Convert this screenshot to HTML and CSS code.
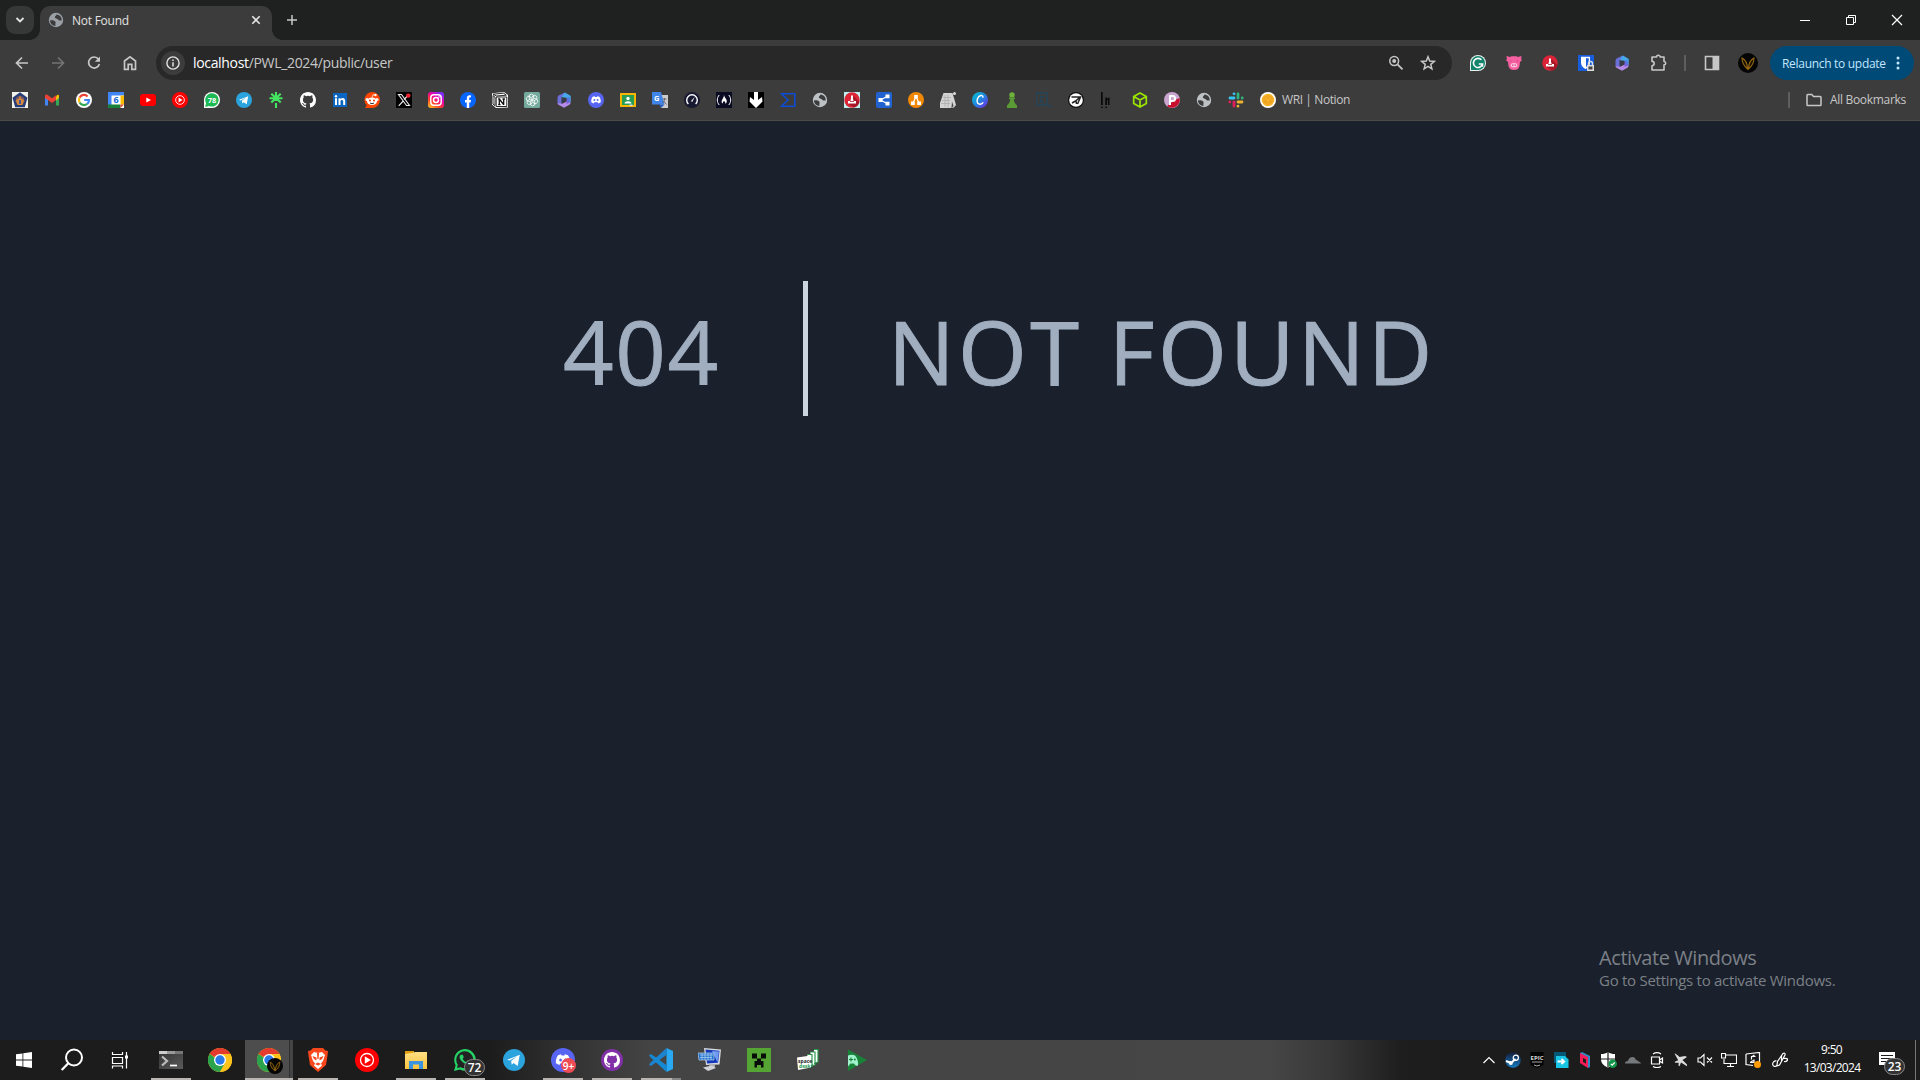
FILE: index.html
```html
<!DOCTYPE html>
<html lang="en">
<head>
<meta charset="utf-8">
<title>Not Found</title>
<link rel="stylesheet" href="styles.css">
</head>
<body>
<svg class="sprite" width="0" height="0" aria-hidden="true">
  <defs>
    <linearGradient id="m365" x1="0" y1="1" x2="1" y2="0"><stop offset="0" stop-color="#8a55dd"/><stop offset=".5" stop-color="#5a6edc"/><stop offset="1" stop-color="#35b5f0"/></linearGradient>
    <linearGradient id="insta" x1="0" y1="1" x2=".7" y2="0"><stop offset="0" stop-color="#ffd522"/><stop offset=".4" stop-color="#ff3b2f"/><stop offset=".7" stop-color="#f000b0"/><stop offset="1" stop-color="#7b30ff"/></linearGradient>
    <linearGradient id="canva" x1="0" y1="0" x2="1" y2="1"><stop offset="0" stop-color="#00c4cc"/><stop offset=".5" stop-color="#2087e0"/><stop offset="1" stop-color="#7a20e8"/></linearGradient>
    <linearGradient id="steam" x1="0" y1="0" x2="0" y2="1"><stop offset="0" stop-color="#121c3a"/><stop offset="1" stop-color="#187ac0"/></linearGradient>
    <linearGradient id="term" x1="0" y1="0" x2="1" y2="1"><stop offset="0" stop-color="#333"/><stop offset="1" stop-color="#5a5a5a"/></linearGradient>
    <linearGradient id="folder" x1="0" y1="0" x2="0" y2="1"><stop offset="0" stop-color="#ffe083"/><stop offset="1" stop-color="#f9c33c"/></linearGradient>
  </defs>
  <symbol id="globe" viewBox="0 0 16 16"><circle cx="8" cy="8" r="7.200" fill="currentColor"/><path d="M2 8.500c2.500-.5 5 .2 5.500 1.600.4 1.300-.5 1.700 0 3.900-3-.1-5.400-2.300-5.500-5.500zM8.500 2.400C8 4 6.800 3.800 6.900 5.200 7 6.800 9 6 9.800 7.300c.7 1.300 2 1.500 3.900 1.200.4-3-1.700-5.700-5.200-6.100z" fill="#3c3c3c"/></symbol>
  <symbol id="ytm" viewBox="0 0 24 24"><circle cx="12" cy="12" r="12" fill="#f00"/><circle cx="12" cy="12" r="6.500" fill="none" stroke="#fff" stroke-width="1.300"/><path d="M9.800 8.300l6 3.700-6 3.700z" fill="#fff"/></symbol>
  <symbol id="telegram" viewBox="0 0 24 24"><circle cx="12" cy="12" r="12" fill="#2ba3dd"/><path d="M4.500 11.800l13.800-5.500-2.300 12.200-4.500-3.300-2 2-.6-4.200 6.500-5-8.200 4.600z" fill="#fff"/></symbol>
  <symbol id="github" viewBox="0 0 16 16"><path d="M8 0C3.580 0 0 3.580 0 8c0 3.540 2.290 6.530 5.470 7.590.4.070.55-.17.55-.38 0-.19-.01-.82-.01-1.490-2.010.37-2.530-.49-2.690-.94-.09-.23-.48-.94-.82-1.130-.28-.15-.68-.52-.01-.53.63-.01 1.080.58 1.230.82.72 1.210 1.870.87 2.330.66.070-.52.28-.87.51-1.070-1.780-.2-3.640-.89-3.640-3.950 0-.87.31-1.590.82-2.150-.08-.2-.36-1.020.08-2.120 0 0 .67-.21 2.200.82a7.600 7.600 0 0 1 4 0c1.530-1.040 2.200-.82 2.200-.82.44 1.100.16 1.920.08 2.120.51.56.82 1.270.82 2.150 0 3.070-1.870 3.750-3.650 3.950.29.25.54.73.54 1.480 0 1.070-.01 1.930-.01 2.200 0 .21.15.46.55.38A8 8 0 0 0 16 8c0-4.420-3.580-8-8-8z" fill="currentColor"/></symbol>
  <symbol id="m365i" viewBox="0 0 16 16"><path d="M9 .5l5.500 3.300v4.700l-4.200-2.800L6 5.200V2.200z" fill="#45a8ea"/><path d="M9 .5L3 3.200Q1.500 4 1.500 5.800V11l4 1.800V5.300z" fill="#6a6fd8"/><path d="M1.500 11l4.500.8 8.500-4v2.900q0 1.300-1.200 2L8 15.700l-5-2.600q-1.500-.8-1.500-2.100z" fill="#b58bea"/><path d="M14.500 4v6l-4 2V6z" fill="url(#m365)"/><path d="M6 5.800l4 2.200-4 3.500z" fill="#37394e"/></symbol>
  <symbol id="discord" viewBox="0 0 24 24"><circle cx="12" cy="12" r="12" fill="#5865f2"/><path d="M7 7.200l3-.9.600 1.100h2.800l.6-1.100 3 .9c1.800 2.700 2.400 5.400 2.100 8.100l-3.400 1.800-1-1.700H9.300l-1 1.700-3.400-1.800C4.600 12.600 5.200 9.900 7 7.200z" fill="#fff"/><ellipse cx="9.600" cy="12" rx="1.400" ry="1.600" fill="#5865f2"/><ellipse cx="14.400" cy="12" rx="1.400" ry="1.600" fill="#5865f2"/></symbol>
  <symbol id="stamp" viewBox="0 0 16 16"><circle cx="8" cy="8" r="7.700" fill="#dc2438"/><path d="M9.500 4l6 6c-1 3.500-3.500 5-5.500 5.500L4.500 12z" fill="#a81627"/><path d="M7 3.600h2v2.800L9.600 9H12v2.600H4V9h2.400L7 6.400zM6 9.300h4v.8H6z" fill="#fff" fill-rule="evenodd"/></symbol>
  <symbol id="chrome" viewBox="0 0 24 24"><circle cx="12" cy="12" r="12" fill="#fbc117"/><path d="M12 12L1.600 6A12 12 0 0 1 22.400 6z" fill="#e33b2e"/><path d="M12 12l-6-3L1.600 6A12 12 0 0 0 12 24l5.200-9z" fill="#2ba24c"/><path d="M12 6h10.400A12 12 0 0 1 12 24l5.200-9z" fill="#fcc31b"/><circle cx="12" cy="12" r="6" fill="#fff"/><circle cx="12" cy="12" r="4.700" fill="#2a7bea"/></symbol>
  <symbol id="avatar" viewBox="0 0 20 20"><circle cx="10" cy="10" r="10" fill="#050505"/><path d="M4 5c0 5 2 8 5.500 11C9.500 11 8 7 4 5zM16 5c0 5-2 8-5.500 11 0-5 1.500-9 5.500-11z" fill="#1c1303" stroke="#94680f" stroke-width="1.100"/></symbol>
  <symbol id="wa" viewBox="0 0 24 24"><path d="M1 23l1.600-5.800A10.800 10.800 0 1 1 6.900 21.400z" fill="currentColor"/></symbol>
</svg>

<header class="browser">
  <div class="tabstrip">
    <button class="tab-search" aria-label="Search tabs"><svg width="10" height="10" viewBox="0 0 10 10"><path d="M1.500 3l3.500 3.500L8.500 3" fill="none" stroke="#e3e3e3" stroke-width="1.800"/></svg></button>
    <div class="tab">
      <svg class="tab-icon" width="16" height="16"><use href="#globe"/></svg>
      <span class="tab-title">Not Found</span>
      <svg width="10" height="10" viewBox="0 0 10 10"><path d="M1.300 1.300l7.400 7.400M8.700 1.300L1.300 8.700" stroke="#e3e3e3" stroke-width="1.600"/></svg>
    </div>
    <svg class="new-tab" width="12" height="12" viewBox="0 0 12 12"><path d="M6 1v10M1 6h10" stroke="#c7c7c7" stroke-width="1.500"/></svg>
    <div class="window-controls">
      <svg width="46" height="40" viewBox="0 0 46 40"><path d="M18 20.500h10" stroke="#fff"/></svg>
      <svg width="46" height="40" viewBox="0 0 46 40"><path d="M18.500 17.500h7v7h-7zM20.500 17.500v-2h7v7h-2" fill="none" stroke="#fff"/></svg>
      <svg width="46" height="40" viewBox="0 0 46 40"><path d="M18 15l10 10M28 15L18 25" stroke="#fff" stroke-width="1.200"/></svg>
    </div>
  </div>

  <div class="toolbar">
    <nav class="nav-buttons">
      <svg width="16" height="16" viewBox="0 0 16 16"><path d="M14 8H3M8 2.500L2.500 8 8 13.500" fill="none" stroke="#c7c7c7" stroke-width="1.700"/></svg>
      <svg width="16" height="16" viewBox="0 0 16 16"><path d="M2 8h11M8 2.500L13.500 8 8 13.500" fill="none" stroke="#737373" stroke-width="1.700"/></svg>
      <svg width="16" height="16" viewBox="0 0 16 16"><path d="M12.500 4.200A5.500 5.500 0 1 0 13.400 9" fill="none" stroke="#c7c7c7" stroke-width="1.700"/><path d="M14 1.500v5.200H8.800z" fill="#c7c7c7"/></svg>
      <svg width="16" height="16" viewBox="0 0 16 16"><path d="M2.500 6L8 1.800 13.500 6v8.300H9.800v-5H6.200v5H2.500z" fill="none" stroke="#c7c7c7" stroke-width="1.700"/></svg>
    </nav>
    <div class="omnibox">
      <span class="site-info"><svg width="14" height="14" viewBox="0 0 14 14"><circle cx="7" cy="7" r="6.100" fill="none" stroke="#e3e3e3" stroke-width="1.400"/><path d="M7 6.200v4.200M7 3.500V5" stroke="#e3e3e3" stroke-width="1.500"/></svg></span>
      <span class="url"><b>localhost</b>/PWL_2024/public/user</span>
      <svg width="16" height="16" viewBox="0 0 16 16"><circle cx="6.200" cy="6" r="4.400" fill="none" stroke="#c7c7c7" stroke-width="1.500"/><circle cx="6.200" cy="6" r="2" fill="#c7c7c7"/><path d="M9.500 9.300l5 5" stroke="#c7c7c7" stroke-width="1.800"/></svg>
      <svg width="16" height="16" viewBox="0 0 16 16"><path d="M8 1.800l1.700 4.300 4.700.3-3.600 3 1.100 4.500L8 11.400l-3.900 2.500 1.100-4.500-3.600-3 4.700-.3z" fill="none" stroke="#c7c7c7" stroke-width="1.500"/></svg>
    </div>
    <div class="extensions">
      <svg width="16" height="16" viewBox="0 0 16 16"><path d="M8 0a8 8 0 1 1 0 16H0V8a8 8 0 0 1 8-8z" fill="#e8f3ef"/><path d="M8 1a7 7 0 1 1 0 14H1V8a7 7 0 0 1 7-7z" fill="#13836c"/><path d="M11.400 4.800A4.600 4.600 0 1 0 12.500 9H8.800M12.500 8.300v3.400" fill="none" stroke="#fff" stroke-width="1.600"/></svg>
      <svg width="16" height="16" viewBox="0 0 16 16"><path d="M.5 1l3.500 1 1.500-.7h5L12 2l3.500-1-.3 3.500.8 1-2 1.300-.5 4.500L12 14q-4 2-8 0l-1.500-2.700L2 6.800 0 5.500l.8-1z" fill="#f65fa0"/><ellipse cx="8" cy="10.300" rx="3.300" ry="2.200" fill="#ffc4dc"/><path d="M6.800 9.300v1.800M9.200 9.300v1.800M4.700 5.500v1.200M11.300 5.500v1.200" stroke="#c0387c"/></svg>
      <svg width="16" height="16"><use href="#stamp"/></svg>
      <svg width="16" height="16" viewBox="0 0 16 16"><path d="M0 0h16v16H0z" fill="#175ddc"/><path d="M3 1.700h9v6c0 3-2 5-4.500 6.300C5 12.700 3 10.700 3 7.700z" fill="#fff"/><path d="M8 3.300h2.700v5C10.500 10 9.500 11 8 12z" fill="#175ddc"/><path d="M9 10h7v6H9z" fill="#ddd"/><path d="M10.500 10V8.500a2 2 0 0 1 4 0V10" fill="none" stroke="#ddd" stroke-width="1.400"/><path d="M10.500 11.500h4v3h-4z" fill="#444"/></svg>
      <svg width="16" height="16"><use href="#m365i"/></svg>
      <svg width="18" height="18" viewBox="0 0 18 18"><path d="M2 3h4.500a1.800 1.800 0 0 1 3.600 0H14v4.500a1.700 1.700 0 0 1 0 3.400V16H2v-4.300a2 2 0 0 0 0-4.300z" fill="none" stroke="#c7c7c7" stroke-width="1.600" stroke-linejoin="round"/></svg>
    </div>
    <i class="separator"></i>
    <svg class="side-panel" width="16" height="16" viewBox="0 0 16 16"><path d="M1.500 1.500h13v13h-13z" fill="none" stroke="#c7c7c7" stroke-width="1.600"/><path d="M8.500 1.500h6v13h-6z" fill="#c7c7c7"/></svg>
    <svg class="profile" width="20" height="20"><use href="#avatar"/></svg>
    <button class="relaunch"><span>Relaunch to update</span><svg width="4" height="16" viewBox="0 0 4 16"><circle cx="2" cy="3" r="1.500" fill="#c2e7ff"/><circle cx="2" cy="8" r="1.500" fill="#c2e7ff"/><circle cx="2" cy="13" r="1.500" fill="#c2e7ff"/></svg></button>
  </div>

  <div class="bookmarks">
    <svg viewBox="0 0 16 16"><path d="M0 0h16v16H0z" fill="#f3f1ea"/><path d="M8 .3l7.500 5.500-2.700 9.400H3.200L.5 5.800z" fill="#243c77"/><circle cx="8" cy="8.500" r="4.600" fill="#7a5560"/><path d="M8 3l1 3.500 3 1.500-1.500 5h-5L4 8l3-1.500z" fill="#d98a3c"/><path d="M7 8h2v4H7z" fill="#44589a"/></svg>
    <svg viewBox="0 0 16 16"><path d="M1 4v9.500h3V7z" fill="#4285f4"/><path d="M12 7v6.500h3V4z" fill="#34a853"/><path d="M12 4.500v4L15 6V4c0-1.800-2-2-3 .5z" fill="#fbbc04"/><path d="M1 4c0-1.800 1.800-2 3-.8l4 3 4-3v4.900l-4 3-4-3L1 6z" fill="#ea4335"/></svg>
    <svg viewBox="0 0 16 16"><circle cx="8" cy="8" r="8" fill="#fff"/><g fill="none" stroke-width="2.200"><path d="M11.600 4.400A5 5 0 0 0 3.600 5.600" stroke="#ea4335"/><path d="M3.600 5.600a5 5 0 0 0 0 4.800" stroke="#fbbc05"/><path d="M3.600 10.400a5 5 0 0 0 7.600 1.500" stroke="#34a853"/><path d="M11.200 11.900A5 5 0 0 0 13 8H8.200" stroke="#4285f4"/></g></svg>
    <svg viewBox="0 0 16 16"><path d="M0 0h16v16H0z" fill="#fff"/><path d="M0 0h16v3.500H3.500V13H0z" fill="#4285f4"/><path d="M12.500 3.500H16v9h-3.500z" fill="#fbbc04"/><path d="M3 12.500h9.500V16H0v-3.500z" fill="#188038"/><path d="M12.500 12.500H16L12.500 16z" fill="#ea4335"/><text x="8" y="11.200" class="glyph blue">6</text></svg>
    <svg viewBox="0 0 16 16"><rect y="2" width="16" height="12" rx="3" fill="#f00"/><path d="M6.300 5.500L11 8l-4.700 2.500z" fill="#fff"/></svg>
    <svg><use href="#ytm"/></svg>
    <svg viewBox="0 0 16 16"><path d="M0 16V8a8 8 0 1 1 8 8z" fill="#fff"/><path d="M1.200 15l.8-4a6.700 6.700 0 1 1 3.200 3z" fill="#1cb954"/><text x="8" y="11" class="glyph tiny">78</text></svg>
    <svg><use href="#telegram"/></svg>
    <svg viewBox="0 0 16 16"><path d="M8 0v9M1.500 6.200h13M3.300 1.800l9.400 8.800M12.700 1.800l-9.400 8.800M8 11v5" stroke="#43e660" stroke-width="2.100"/></svg>
    <svg class="white"><use href="#github"/></svg>
    <svg viewBox="0 0 16 16"><path d="M1 1h14v14H1z" fill="#0a66c2"/><path d="M3 6.300h2V13H3zM6.500 6.300h2v1c1.300-2 4.700-1.500 4.700 1.700v4h-2V9.500c0-2-2.700-2-2.700 0V13h-2z" fill="#fff"/><circle cx="4" cy="4.200" r="1.200" fill="#fff"/></svg>
    <svg viewBox="0 0 16 16"><path d="M8 0a8 8 0 1 1 0 16H.8l2-2.400A8 8 0 0 1 8 0z" fill="#ff4500"/><ellipse cx="8" cy="9.200" rx="5" ry="3.800" fill="#fff"/><circle cx="3" cy="7.500" r="1.500" fill="#fff"/><circle cx="13" cy="7.500" r="1.500" fill="#fff"/><circle cx="11.500" cy="3" r="1.200" fill="#fff"/><path d="M8 5.500L9 2.800l2.500.3" fill="none" stroke="#fff" stroke-width=".8"/><circle cx="6" cy="8.500" r="1" fill="#e83b00"/><circle cx="10" cy="8.500" r="1" fill="#e83b00"/><path d="M6 11c1.200.8 2.800.8 4 0" stroke="#333" fill="none"/></svg>
    <svg viewBox="0 0 16 16"><path d="M0 0h16v16H0z"/><path d="M2.500 2.500h3l8 11h-3zM13 2.500l-5 5M7.200 9l-4.500 4.800" fill="none" stroke="#eee" stroke-width="1.100"/><circle cx="12.300" cy="3.600" r="2.200" fill="#f4212e"/></svg>
    <svg viewBox="0 0 16 16"><rect width="16" height="16" rx="3" fill="url(#insta)"/><rect x="2.800" y="2.800" width="10.400" height="10.400" rx="3" fill="none" stroke="#fff" stroke-width="1.400"/><circle cx="8" cy="8" r="2.500" fill="none" stroke="#fff" stroke-width="1.400"/><circle cx="11" cy="5" r=".8" fill="#fff"/></svg>
    <svg viewBox="0 0 16 16"><circle cx="8" cy="8" r="8" fill="#0866ff"/><path d="M6.800 16v-5.500H5V8h1.800V6.500c0-2.500 1.600-3.600 4.200-3.100v2c-1.300-.2-1.800.1-1.800 1.200V8H11l-.4 2.500H9.200V16z" fill="#fff"/></svg>
    <svg viewBox="0 0 16 16"><path d="M0 1.200L12 0l4 3v12.500L4 16l-4-3.500z" fill="#fff"/><path d="M1.200 2.200L11.700 1.200l2.600 2L4.500 4zM4.200 5h10.600v9.500H4.200zM1 3.500l2 1.700v8.500l-2-1.700z" fill="none" stroke="#111" stroke-width=".9"/><path d="M7.300 7v5.800M7.300 7l4.300 5.500M11.700 7v6M6.200 7h2M6.200 12.700h2.300M10.500 7h2.400" stroke="#111" stroke-width="1.300" fill="none"/></svg>
    <svg viewBox="0 0 16 16"><rect width="16" height="16" rx="1.500" fill="#74aa9c"/><g fill="none" stroke="#fff" stroke-width=".8"><path id="petal" d="M8 8V4.800l2.800-1.600q3 .8 2 4L10 8.800"/><use href="#petal" transform="rotate(60 8 8)"/><use href="#petal" transform="rotate(120 8 8)"/><use href="#petal" transform="rotate(180 8 8)"/><use href="#petal" transform="rotate(240 8 8)"/><use href="#petal" transform="rotate(300 8 8)"/></g></svg>
    <svg><use href="#m365i"/></svg>
    <svg><use href="#discord"/></svg>
    <svg viewBox="0 0 16 16"><path d="M0 1h16v14H0z" fill="#f6b704"/><path d="M2 3h12v10H2z" fill="#289b55"/><circle cx="8" cy="6.500" r="1.700" fill="#fff"/><path d="M4.500 11.500c0-3 7-3 7 0z" fill="#fff"/><path d="M9.500 12.500h3V14h-3z" fill="#ddd"/></svg>
    <svg viewBox="0 0 16 16"><path d="M6 3h10v13H9z" fill="#ccc"/><path d="M0 0h9l3.500 12.500H0z" fill="#4285e8"/><path d="M7.500 12.500h5L9 16z" fill="#245dc1"/><text x="4.800" y="8.600" class="glyph tiny">G</text><path d="M10.500 7h4M12.500 6v1c0 2-1 3.500-2 4M11.500 9l3 3.500" stroke="#667" fill="none"/></svg>
    <svg viewBox="0 0 16 16"><circle cx="8" cy="8" r="8" fill="#171a30"/><path d="M4.400 12A5.300 5.300 0 1 1 11.600 12" fill="none" stroke="#fff" stroke-width="1.400"/><path d="M7 9l3.700-4-2.500 5z" fill="#fff"/></svg>
    <svg viewBox="0 0 16 16"><path d="M0 0h16v16H0z" fill="#0a0a23"/><path d="M3.200 3c-2.500 3-2.500 7 0 10M12.800 3c2.500 3 2.500 7 0 10" fill="none" stroke="#fff"/><path d="M8 3c.2 2.500 3 4 2.800 6.500-.1 1.300-.9 2-1.500 2.200.3-1.500-.5-2-1.300-2.700-.8.800-1.500 1.500-1.200 2.700C3.500 9.500 8 6.500 8 3z" fill="#fff"/></svg>
    <svg viewBox="0 0 16 16"><path d="M0 0h16v16H0z"/><path d="M6 0h4v8l4-3 .5 4.500L8 16 1.500 9.500 2 5l4 3z" fill="#fff"/></svg>
    <svg viewBox="0 0 16 16"><path d="M1.500 1.700h13.300v12.600H1.500L8 8z" fill="none" stroke="#0b4dda" stroke-width="1.500"/></svg>
    <svg class="lightgrey"><use href="#globe"/></svg>
    <svg viewBox="0 0 16 16"><path d="M0 0h16v16H0z" fill="#bdf0ee"/><use href="#stamp" width="16" height="16"/></svg>
    <svg viewBox="0 0 16 16"><rect width="16" height="16" rx="2" fill="#1f62d0"/><path d="M11.500 4.300L4.500 8l7 3.700" stroke="#fff" fill="none" stroke-width="1.200"/><path d="M2.500 6h4v4h-4zM9.500 2.500h4v3.800h-4zM9.500 9.700h4v3.800h-4z" fill="#fff"/></svg>
    <svg viewBox="0 0 16 16"><circle cx="8" cy="8" r="8" fill="#f08705"/><path d="M8 4.500l-3.200 7M8 4.500l3.200 7" stroke="#fff" stroke-width="1.200"/><path d="M6.200 3h3.600v3.500H6.200zM3 9.500h3.800V13H3zM9.200 9.500H13V13H9.200z" fill="#fff"/></svg>
    <svg viewBox="0 0 16 16"><path d="M3.500 1l9 0L16 13l-2 2.500-4 .5H0V11z" fill="#d4d4d4"/><circle cx="14.500" cy="1.500" r="1.500" fill="#ddd"/><path d="M5 3v12M8 2.500v13M3 5.500h8M2 8.500h8M1 11.500h9" stroke="#a8a8a8" stroke-width=".7"/><path d="M12 9.500l1.500 4.500-2 2z" fill="#444"/></svg>
    <svg viewBox="0 0 16 16"><circle cx="8" cy="8" r="8" fill="url(#canva)"/><path d="M10.800 5.800c.4-1.500-.5-2.700-2-2.300C6 4.200 4.700 7.500 5.200 10c.6 3 4 3 6 .3" fill="none" stroke="#fff" stroke-width="1.400"/></svg>
    <svg viewBox="0 0 16 16"><circle cx="8" cy="3" r="2.700" fill="#6eb23c"/><path d="M5 5.500h6v1.700H9.800c.1 2.500 1 4 3.200 6.300V16H3v-2.500C5.200 11.200 6.100 9.700 6.200 7.200H5z" fill="#5a9b35"/></svg>
    <svg viewBox="0 0 16 16"><path d="M1 1h10v12H1zM8 5H4.500v5H8M12 14h4" fill="none" stroke="#24465c" stroke-width="1.300"/></svg>
    <svg viewBox="0 0 16 16"><circle cx="8" cy="8" r="8" fill="#111"/><circle cx="8" cy="8" r="6.800" fill="#fff"/><path d="M3.500 5h9L9.500 12M12 5L8 8.800l.5 3M8.500 8.500L4 11" fill="none" stroke="#222" stroke-width="1.500"/></svg>
    <svg viewBox="0 0 16 16"><path d="M1 0h1.700v13H1zM5.300 5.500H7V7q2-2 2.500-1.800V13H8V8L7 8.500V13H5.300zM1 14.700h1.700V16H1zM5.300 14.700H7V16H5.300z" fill="#090909"/></svg>
    <svg viewBox="0 0 16 16"><path d="M8 1l6.300 3.500v7L8 15l-6.300-3.500v-7zM1.700 4.500L8 8l6.300-3.500M8 8v7" fill="none" stroke="#9be500" stroke-width="1.700"/></svg>
    <svg viewBox="0 0 16 16"><circle cx="8" cy="8" r="8" fill="#c9a5d0"/><path d="M15.500 6A8 8 0 0 1 3 14.200L9 9z" fill="#c8102e"/><path d="M6 13V4h2.500c3.500 0 3.500 5 0 5H6" fill="none" stroke="#fff" stroke-width="2"/></svg>
    <svg class="lightgrey"><use href="#globe"/></svg>
    <svg viewBox="0 0 16 16" stroke-width="2.800" stroke-linecap="round"><path d="M6 1.800v.01M2 6h4" stroke="#36c5f0"/><path d="M10 2v4M14.200 6v.01" stroke="#2eb67d"/><path d="M10 14.200v.01M10 10h4" stroke="#ecb22e"/><path d="M6 10v4M1.800 10v.01" stroke="#e01e5a"/></svg>
    <a class="bookmark"><svg viewBox="0 0 16 16"><circle cx="8" cy="8" r="8" fill="#fff"/><circle cx="8" cy="8" r="6.300" fill="#f9b52b"/><path d="M8 3.500l4 2.200v4.600l-4 2.200-4-2.200V5.700zM8 5l-3 5h6z" fill="none" stroke="#e3981a" stroke-width=".8"/></svg><span>WRI | Notion</span></a>
    <div class="all-bookmarks">
      <i class="separator"></i>
      <svg viewBox="0 0 16 16"><path d="M1 12.500V3.300q0-.8.800-.8h4l1.700 2h6.700q.8 0 .8.800v7.400q0 .8-.8.800H1.800q-.8 0-.8-.8z" fill="none" stroke="#c7c7c7" stroke-width="1.500"/></svg>
      <span>All Bookmarks</span>
    </div>
  </div>
</header>

<main class="page">
  <div class="error">
    <div class="code">404</div>
    <div class="message">Not Found</div>
  </div>
  <aside class="activate">
    <p class="activate-title">Activate Windows</p>
    <p class="activate-text">Go to Settings to activate Windows.</p>
  </aside>
</main>

<footer class="taskbar">
  <div class="start-area">
    <div class="cell"><svg width="16" height="16" viewBox="0 0 16 16"><path d="M0 2.300l6.500-.9v6.200H0zM7.300 1.300L16 0v7.600H7.300zM0 8.400h6.500v6.200L0 13.700zM7.300 8.400H16V16l-8.700-1.300z" fill="#fff"/></svg></div>
    <div class="cell"><svg width="24" height="24" viewBox="0 0 24 24"><circle cx="14" cy="9.500" r="8" fill="none" stroke="#fff" stroke-width="2"/><path d="M8.300 15.300L1.700 22" stroke="#fff" stroke-width="2.300"/></svg></div>
    <div class="cell"><svg width="18" height="18" viewBox="0 0 18 18"><path d="M1.500 1v2.500h10V1M1.500 6.500h10v6h-10zM1.500 17.500V15h10v2.500M15.500 1v16.500" fill="none" stroke="#fff" stroke-width="1.200"/><path d="M14 4.500h3v3h-3z" fill="#fff"/></svg></div>
  </div>
  <div class="apps">
    <div class="app open"><svg width="24" height="24" viewBox="0 0 24 24"><path d="M0 3h24v18H0z" fill="url(#term)"/><path d="M0 3h8v3H0z" fill="#ccc"/><path d="M8 3h8v3H8z" fill="#999"/><path d="M16 3h8v3h-8z" fill="#777"/><path d="M3 8.500l5 4.500-5 4.500" fill="none" stroke="#bbb" stroke-width="2.300"/><path d="M11 17.500h7" stroke="#fff" stroke-width="1.700"/></svg></div>
    <div class="app"><svg width="24" height="24"><use href="#chrome"/></svg></div>
    <div class="app open active"><svg width="24" height="24"><use href="#chrome"/></svg><svg class="profile-badge" width="16" height="16"><use href="#avatar"/></svg></div>
    <div class="app open"><svg width="24" height="24" viewBox="0 0 24 24"><path d="M7 0h10l2.500 2.500L22 3l-.5 4.500L20 17l-8 7-8-7L2.500 7.500 2 3l2.500-.5z" fill="#f9471b"/><path d="M8 4l4 1 4-1 3 3-2 6-2 2.500 1 2-4 3.500-4-3.500 1-2L7 13 5 7z" fill="#fff"/><path d="M6.500 8l4 1.500v3L8 11zM17.500 8l-4 1.500v3L16 11zM9 16l3-1.500 3 1.500-3 1.500zM11 5h2l-.4 6h-1.200z" fill="#f9471b"/></svg></div>
    <div class="app"><svg width="24" height="24"><use href="#ytm"/></svg></div>
    <div class="app open"><svg width="24" height="24" viewBox="0 0 24 24"><path d="M1 3h9v4H1z" fill="#e09d0a"/><path d="M1 6l9-1.500 1-.5h12v17H1z" fill="url(#folder)"/><path d="M5 21v-8h14v8h-4v-4.500H9V21z" fill="#3a93dc"/></svg></div>
    <div class="app open whatsapp"><svg width="24" height="24" viewBox="0 0 24 24"><use href="#wa"/><path d="M4 20l.8-3.300A8.500 8.500 0 1 1 7.700 19.300z" fill="#222"/><path d="M7.800 6.800h2l1 2.500-1.200 1.500c.9 1.600 1.900 2.500 3.500 3.300l1.400-1.700 2.600 1.200c0 2-1.500 3-3.200 2.700C10 15.500 6.700 11.700 6.600 9c0-1 .5-1.700 1.200-2.200z" fill="currentColor"/></svg><span class="count pill">72</span></div>
    <div class="app"><svg width="22" height="22"><use href="#telegram"/></svg></div>
    <div class="app open"><svg width="24" height="24"><use href="#discord"/></svg><span class="count red">9+</span></div>
    <div class="app open"><svg class="white" width="22" height="22" viewBox="0 0 22 22"><circle cx="11" cy="11" r="11" fill="#8230a8"/><use href="#github" x="3" y="3" width="16" height="16"/></svg></div>
    <div class="app open split"><svg width="24" height="24" viewBox="0 0 24 24"><path d="M17.500 0L24 3v18l-6.500 3z" fill="#28a9f2"/><path d="M17.500 0L2 14.300 0 16.500l2 1.500L18 6.500z" fill="#1c83cf"/><path d="M17.500 24L2 9.700 0 7.500 2 6l16 11.500z" fill="#1689d3"/></svg></div>
    <div class="app"><svg width="24" height="24" viewBox="0 0 24 24"><path d="M6 0l17 1.500-1.500 15L8 17z" fill="#d9dce0"/><path d="M7.500 1.500l14 1.300-1.500 12-11 .7z" fill="#1238b8"/><path d="M14 3l7 .5-1.500 11z" fill="#6f9cf0"/><path d="M0 5h16v7H1z" fill="#2573ce" stroke="#bbd2ef" stroke-width=".7"/><path d="M2 7h13M2 9.500h12M4 5v7M7 5v7M10 5v7M13 5v7" stroke="#a5c9f0" stroke-width=".8"/><path d="M11 16.500l6-.5v3l-5 1z" fill="#aaa"/><path d="M5 19.500l9-2 4 2.500-8 3z" fill="#cfd3d8"/></svg></div>
    <div class="app"><svg width="24" height="24" viewBox="0 0 24 24"><path d="M0 0h24v24H0z" fill="#54a533"/><path d="M5 5.500h5v5H5zM14 5.500h5v5h-5zM10 10.500h4V13h2.500v6.500H14V17h-4v2.500H7.500V13H10z" fill="#080c06"/></svg></div>
    <div class="app"><svg width="24" height="24" viewBox="0 0 24 24"><path d="M18 1.500h4V14l-4 1.500M14.500 4H19v13l-4 .5M11 6.500h5V19" fill="#fff" stroke="#29994e" stroke-width="1.200"/><path d="M1 9.500L15 7.500v12L2 22z" fill="#fff"/><text x="2" y="14.500" class="space">space</text><text x="3" y="19.500" class="space desk">desk</text></svg></div>
    <div class="app"><svg width="24" height="24" viewBox="0 0 24 24"><path d="M3 1.500L22 12 3 23z" fill="#188238"/><path d="M3 7.500q4-1.500 7 0c2 2 3 5 3.200 8.500-.2 3-2.700 2-4.200-.5H5.500L3 18.500z" fill="#a0f2cd"/><path d="M4 11.500h4M6 9.500v4" stroke="#188238" stroke-width="1.200"/><circle cx="9.800" cy="11.500" r="1" fill="#188238"/></svg></div>
  </div>
  <div class="tray">
    <svg viewBox="0 0 16 16"><path d="M2.500 11L8 5.500l5.500 5.500" fill="none" stroke="#fff" stroke-width="1.200"/></svg>
    <svg viewBox="0 0 16 16"><circle cx="8" cy="8" r="7.800" fill="url(#steam)"/><path d="M1 9l5 2 4.500-4" stroke="#fff" stroke-width="2" fill="none"/><circle cx="10.800" cy="5.700" r="2.600" fill="none" stroke="#fff" stroke-width="1.200"/><circle cx="5.800" cy="11" r="2" fill="#fff"/></svg>
    <svg viewBox="0 0 16 16"><path d="M1.500 0h13v13L8 16l-6.500-3z" fill="#030303"/><text x="8" y="7.700" class="epic">EPIC</text><path d="M3 10h10M5 13l3 1 3-1" stroke="#aaa" fill="none"/></svg>
    <svg viewBox="0 0 16 16"><path d="M1 0h12v11H1z" fill="#055873"/><path d="M3 4h9l3.500 3.500V16H3z" fill="#19c5e4"/><path d="M4.500 9.500h6M8.500 7l2.800 2.500L8.500 12" stroke="#fff" stroke-width="1.800" fill="none"/></svg>
    <svg viewBox="0 0 16 16"><path d="M3 1l2-1 8 4v11l-2 1z" fill="#2c8bc8"/><path d="M3 1l8 4v11l-8-5z" fill="#f51c58"/><path d="M6 6l3 1.500v4L6 10z" fill="#1d1d1d"/></svg>
    <svg viewBox="0 0 16 16"><path d="M7 0c2 1.500 4 2 7 2v5c0 5-3.500 7-7 8.500C3.500 14 0 12 0 7V2c3 0 5-.5 7-2z" fill="#fff"/><path d="M7 0v15M0 7h14" stroke="#1c1c1c" stroke-width="1.200"/><circle cx="11.700" cy="11.700" r="4.300" fill="#13964a"/><path d="M9.800 11.800l1.400 1.400 2.500-2.700" stroke="#fff" fill="none" stroke-width="1.200"/></svg>
    <svg viewBox="0 0 16 16"><path d="M0 11.500q0-2.500 3-2.500 1-4 4.500-4 2.500 0 3.500 3 2 0 2.500 1.500 2.500.3 2.500 2z" fill="#75797c"/></svg>
    <svg viewBox="0 0 16 16"><path d="M2.500 5h8v7h-8zM10.500 8l3-2v5l-3-2M4 2c2.500-1.700 5.500-1.700 8 0M4 14.500c2.500 1.500 5.500 1.500 8 0" fill="none" stroke="#fff" stroke-width="1.200"/></svg>
    <svg viewBox="0 0 16 16"><path d="M1.500 1.500Q3 1.300 6.500 5l5.500-1 2 1-4.500 3 4.500 4.500v1.700L8 10.500l-1.500 3.800-1-.5.200-3-3.700 0-.2-1 3.400-1.500z" fill="#ddd"/></svg>
    <svg viewBox="0 0 16 16"><path d="M1 6h2.500L7 2.500v11L3.500 10H1zM10 5.500l5 5M15 5.500l-5 5" fill="none" stroke="#fff" stroke-width="1.100"/></svg>
    <svg viewBox="0 0 16 16"><path d="M4 3h11.500v8.500H3V7M9.500 11.500v3M6 14.500h7M.5 1.500h4V6h-4z" fill="none" stroke="#fff" stroke-width="1.100"/></svg>
    <svg viewBox="0 0 16 16"><path d="M1 2l13.500-1.500V10M8 13.500L1 12.500V2M10.500 4.500h-4v3M5 10.500h4v-3M6.500 5l3-2M9.500 8l-4 2" fill="none" stroke="#fff" stroke-width="1.200"/><circle cx="12.500" cy="12.500" r="3.500" fill="#ff9b05"/></svg>
    <svg class="pen" viewBox="0 0 16 16"><path d="M4.500 9C2 8.500.5 10.500.7 12.500S4 15.500 5 13l.5-3.500L11 1.500q2.500-1 2 1.500L7.500 13 5 14M9.500 4v5.500M11.500 6.500q4.500-.5 4 1.500T12 9.500" fill="none" stroke="#fff" stroke-width="1.200"/></svg>
  </div>
  <div class="clock"><span class="time">9:50</span><span>13/03/2024</span></div>
  <div class="notifications"><svg width="16" height="16" viewBox="0 0 16 16"><path d="M0 0h16v13h-5l-3 3v-3H0z" fill="#fff"/><path d="M2 3.500h12M2 6.500h12M2 9.500h8" stroke="#1c1c1c" stroke-width="1.200"/></svg><span class="count pill">23</span></div>
  <div class="show-desktop"></div>
</footer>
</body>
</html>
```

FILE: styles.css
```css
* { box-sizing: border-box; }

body {
  margin: 0;
  width: 1920px;
  height: 1080px;
  display: flex;
  flex-direction: column;
  overflow: hidden;
  background: #1a202c;
  font-family: "Open Sans", "Noto Sans", sans-serif;
  font-size: 12px;
}

svg { display: block; flex: none; }
button { border: 0; padding: 0; font: inherit; }
.sprite { position: absolute; }
.white { color: #fff; }
.lightgrey { color: #bdc1c6; }

.glyph { font: bold 9px "Open Sans", sans-serif; fill: #fff; text-anchor: middle; }
.glyph.tiny { font-size: 7.5px; }
.glyph.blue { fill: #1967d2; }
.epic { font: bold 6px "Open Sans", sans-serif; fill: #ddd; text-anchor: middle; }
.space { font: bold 5px "Open Sans", sans-serif; fill: #222; }
.desk { fill: #29994e; }

/* Browser window */
.browser { height: 121px; background: #3c3c3c; border-bottom: 1px solid #4a4a4a; }

.tabstrip {
  display: flex;
  align-items: center;
  height: 40px;
  background: #1f2020;
}
.tab-search {
  width: 28px;
  height: 28px;
  margin-left: 6px;
  border-radius: 9px;
  background: #363737;
  display: grid;
  place-items: center;
}
.tab {
  position: relative;
  align-self: flex-end;
  display: flex;
  align-items: center;
  width: 232px;
  height: 34px;
  margin-left: 6px;
  padding: 0 11px 6px 8px;
  border-radius: 10px 10px 0 0;
  background: #3c3c3c;
  color: #e3e3e3;
}
.tab::before,
.tab::after {
  content: "";
  position: absolute;
  bottom: 0;
  width: 10px;
  height: 10px;
}
.tab::before { right: 100%; background: radial-gradient(circle at 0 0, transparent 9.5px, #3c3c3c 10px); }
.tab::after { left: 100%; background: radial-gradient(circle at 100% 0, transparent 9.5px, #3c3c3c 10px); }
.tab-icon { color: #9aa0a6; }
.tab-title { flex: 1; margin-left: 8px; letter-spacing: -0.25px; }
.new-tab { margin-left: 14px; }
.window-controls { display: flex; margin-left: auto; }

.toolbar {
  display: flex;
  align-items: center;
  height: 46px;
  padding: 0 6px 0 14px;
}
.nav-buttons { display: flex; gap: 20px; }
.omnibox {
  display: flex;
  align-items: center;
  gap: 16px;
  width: 1296px;
  height: 34px;
  margin-left: 18px;
  padding: 0 16px 0 5px;
  border-radius: 17px;
  background: #282828;
}
.site-info {
  display: grid;
  place-items: center;
  width: 24px;
  height: 24px;
  border-radius: 50%;
  background: #3c3c3c;
}
.url { flex: 1; margin: -1px 0 0 -8px; color: #c7c7c7; font-size: 14px; letter-spacing: -0.33px; }
.url b { color: #fff; font-weight: 400; }
.extensions { display: flex; align-items: center; gap: 20px; margin-left: 18px; }
.separator { width: 2px; height: 16px; background: #5e5e5e; }
.toolbar .separator { margin-left: 16px; }
.side-panel { margin-left: 18px; }
.profile { margin-left: 18px; }
.relaunch {
  display: flex;
  align-items: center;
  justify-content: space-between;
  width: 144px;
  height: 34px;
  margin-left: auto;
  padding: 0 14px 0 12px;
  border-radius: 17px;
  background: #004a77;
  color: #c2e7ff;
  letter-spacing: -0.3px;
  white-space: nowrap;
}

.bookmarks {
  display: flex;
  align-items: center;
  gap: 16px;
  height: 28px;
  padding: 0 14px 0 12px;
  color: #c7c7c7;
}
.bookmarks svg { width: 16px; height: 16px; }
.bookmarks span { margin-top: -1px; }
.bookmark { display: flex; align-items: center; gap: 6px; letter-spacing: -0.4px; }
.all-bookmarks { display: flex; align-items: center; gap: 8px; margin-left: auto; letter-spacing: -0.3px; }
.all-bookmarks svg { margin-left: 8px; }

/* Error page */
.page {
  position: relative;
  flex: 1;
  color: #a0aec0;
}
.error {
  display: flex;
  padding: 160px 0 0 560px;
  font-size: 88.5px;
  line-height: 139px;
  letter-spacing: 3.4px;
  -webkit-text-stroke: 0.9px #a0aec0;
}
.code { width: 248px; height: 135px; padding-left: 3px; border-right: 5px solid #cbd5e0; letter-spacing: 1.7px; }
.message { height: 135px; margin-left: 80px; text-transform: uppercase; white-space: nowrap; }

.activate {
  position: absolute;
  left: 1599px;
  top: 822px;
  color: #7c8087;
  white-space: nowrap;
}
.activate p { margin: 0; }
.activate-title { font-size: 20px; line-height: 30px; letter-spacing: -0.42px; }
.activate-text { font-size: 15px; line-height: 14px; letter-spacing: -0.27px; }

/* Taskbar */
.taskbar {
  display: flex;
  height: 40px;
  background: linear-gradient(90deg, #1c1c1c 0, #1c1c1c 490px, #323232 570px, #444 650px, #464646 1270px, #383838 1330px, #1e1e1e 1400px, #1c1c1c 1450px);
  color: #fff;
}
.start-area { display: flex; }
.cell { width: 48px; display: grid; place-items: center; }
.apps { display: flex; gap: 1px; margin-left: 3px; }
.app {
  position: relative;
  display: grid;
  place-items: center;
  width: 48px;
  height: 40px;
}
.open::after {
  content: "";
  position: absolute;
  bottom: 0;
  left: 4px;
  width: 40px;
  height: 2px;
  background: #b9b5b2;
}
.active { background: linear-gradient(90deg, #4d4d4d 44px, #303030 44px, #303030 45px, #444 45px); }
.active::after { left: 0; width: 48px; }
.split::after { background: linear-gradient(90deg, #b9b5b2 31px, #858585 31px); }
.whatsapp { color: #25d366; }
.profile-badge { position: absolute; left: 22px; top: 18px; }
.count {
  position: absolute;
  display: grid;
  place-items: center;
  color: #fff;
}
.pill {
  left: 23px;
  top: 19px;
  width: 21px;
  height: 17px;
  border: 1px solid #888;
  border-radius: 9px;
  background: #333;
  font-size: 12px;
  line-height: 14px;
  font-weight: 600;
}
.red {
  left: 22px;
  top: 18px;
  width: 15px;
  height: 15px;
  border-radius: 50%;
  background: #ed4c55;
  font-size: 10px;
  line-height: 14px;
  font-weight: 600;
}

.tray {
  display: flex;
  align-items: center;
  gap: 8px;
  margin-left: auto;
}
.tray svg { width: 16px; height: 16px; }
.tray .pen { margin-left: 3px; }
.clock {
  display: flex;
  flex-direction: column;
  align-items: center;
  width: 88px;
  padding-top: 1px;
  line-height: 18px;
  letter-spacing: -0.7px;
}
.time { padding-right: 1px; }
.notifications {
  position: relative;
  width: 39px;
  padding: 12px 0 0 3px;
}
.notifications .pill { left: 8px; top: 18px; }
.show-desktop { width: 5px; border-left: 1px solid #777; }
```
